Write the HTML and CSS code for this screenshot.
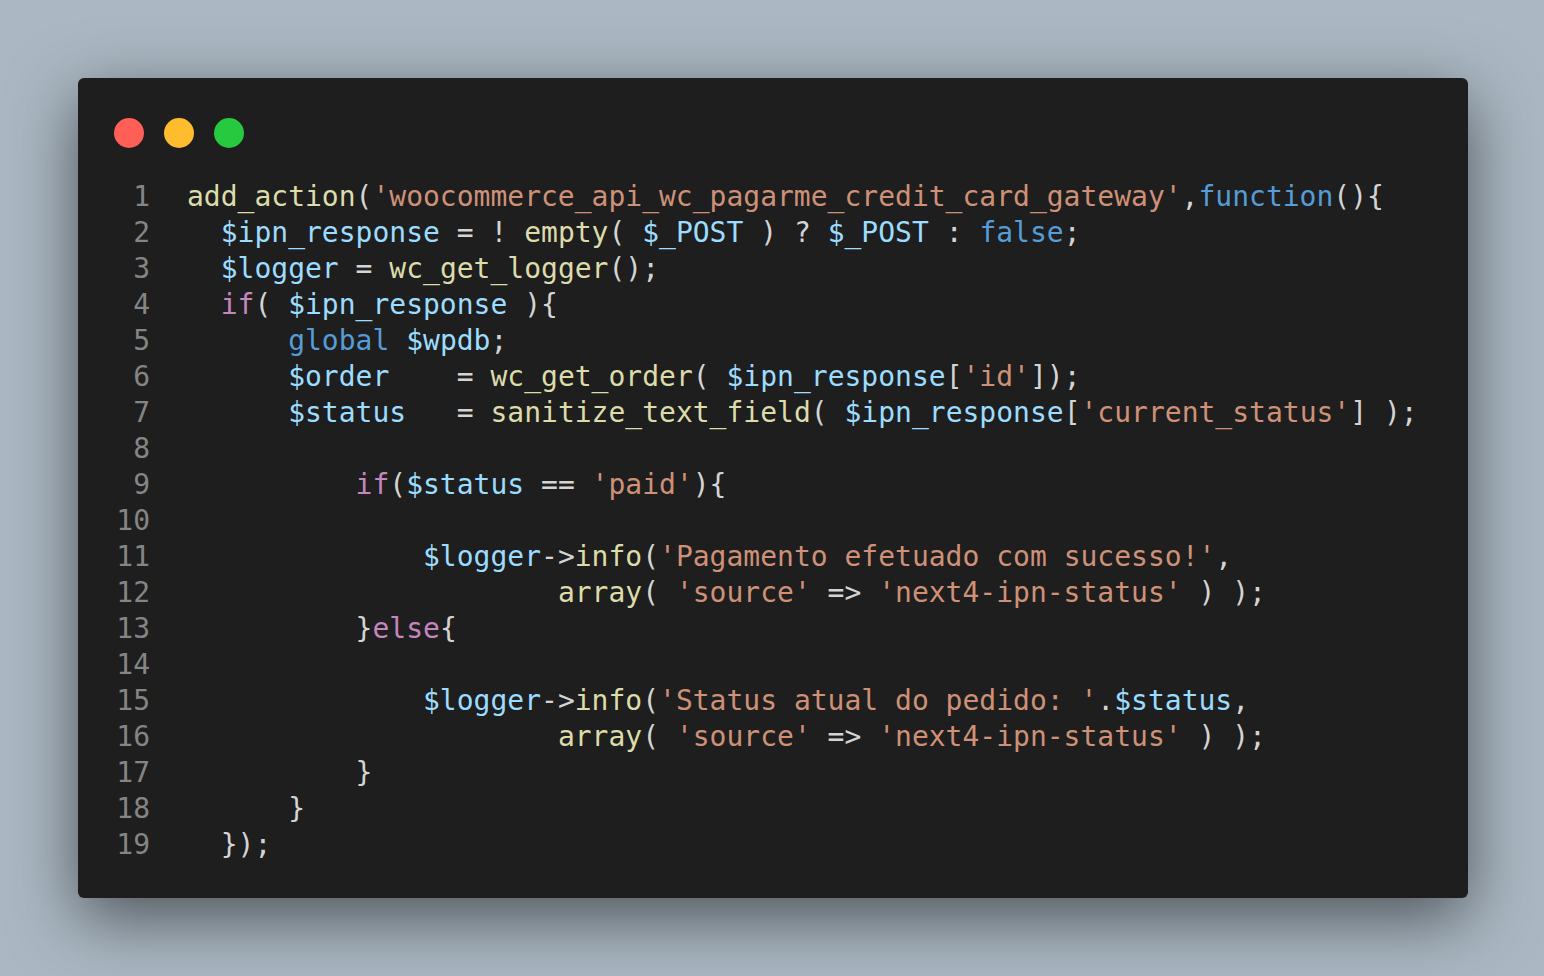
FILE: index.html
```html
<!DOCTYPE html>
<html>
<head>
<meta charset="utf-8">
<link rel="stylesheet" href="styles.css">
</head>
<body>
<div class="page">
  <div class="window">
    <div class="controls">
      <span class="dot red"></span>
      <span class="dot yellow"></span>
      <span class="dot green"></span>
    </div>
    <div class="code">
      <div class="gutter">
        <div>1</div><div>2</div><div>3</div><div>4</div><div>5</div><div>6</div><div>7</div><div>8</div><div>9</div><div>10</div><div>11</div><div>12</div><div>13</div><div>14</div><div>15</div><div>16</div><div>17</div><div>18</div><div>19</div>
      </div>
<pre class="src"><span class="fn">add_action</span>(<span class="str">'woocommerce_api_wc_pagarme_credit_card_gateway'</span>,<span class="st">function</span>(){
  <span class="var">$ipn_response</span> = ! <span class="fn">empty</span>( <span class="var">$_POST</span> ) ? <span class="var">$_POST</span> : <span class="st">false</span>;
  <span class="var">$logger</span> = <span class="fn">wc_get_logger</span>();
  <span class="kw">if</span>( <span class="var">$ipn_response</span> ){
      <span class="st">global</span> <span class="var">$wpdb</span>;
      <span class="var">$order</span>    = <span class="fn">wc_get_order</span>( <span class="var">$ipn_response</span>[<span class="str">'id'</span>]);
      <span class="var">$status</span>   = <span class="fn">sanitize_text_field</span>( <span class="var">$ipn_response</span>[<span class="str">'current_status'</span>] );

          <span class="kw">if</span>(<span class="var">$status</span> == <span class="str">'paid'</span>){

              <span class="var">$logger</span>-&gt;<span class="fn">info</span>(<span class="str">'Pagamento efetuado com sucesso!'</span>,
                      <span class="fn">array</span>( <span class="str">'source'</span> =&gt; <span class="str">'next4-ipn-status'</span> ) );
          }<span class="kw">else</span>{

              <span class="var">$logger</span>-&gt;<span class="fn">info</span>(<span class="str">'Status atual do pedido: '</span>.<span class="var">$status</span>,
                      <span class="fn">array</span>( <span class="str">'source'</span> =&gt; <span class="str">'next4-ipn-status'</span> ) );
          }
      }
  });</pre>
    </div>
  </div>
</div>
</body>
</html>
```

FILE: styles.css
```css
html, body {
  margin: 0;
  padding: 0;
  background: #abb8c3;
}

.page {
  width: 1544px;
  height: 976px;
  box-sizing: border-box;
  padding: 78px 76px 78px 78px;
  background: #abb8c3;
}

.window {
  width: 1390px;
  height: 820px;
  box-sizing: border-box;
  background: #1e1e1e;
  border-radius: 6px;
  box-shadow: 0 20px 68px rgba(0, 0, 0, 0.55);
  padding: 40px 36px 35px 36px;
}

.controls {
  display: flex;
  gap: 20px;
  height: 30px;
}

.dot {
  width: 30px;
  height: 30px;
  border-radius: 50%;
  display: block;
}

.red { background: #ff5f56; }
.yellow { background: #ffbd2e; }
.green { background: #27c93f; }

.code {
  display: flex;
  margin-top: 31px;
  font-family: "DejaVu Sans Mono", monospace;
  font-size: 28px;
  line-height: 36px;
}

.gutter {
  width: 36px;
  text-align: right;
  color: #858585;
  padding-right: 37px;
}

.src {
  margin: 0;
  font: inherit;
  color: #d4d4d4;
  white-space: pre;
}

.fn { color: #dcdcaa; }
.str { color: #ce9178; }
.var { color: #9cdcfe; }
.kw { color: #c586c0; }
.st { color: #569cd6; }
```
